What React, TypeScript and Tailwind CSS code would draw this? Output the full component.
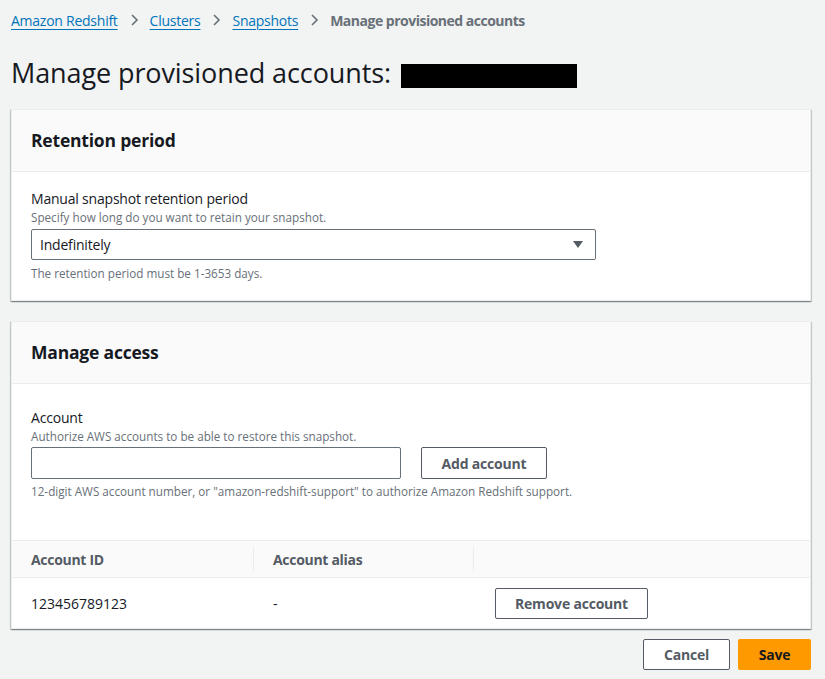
import React from "react";

const font = { fontFamily: '"Open Sans", "Noto Sans", Arial, sans-serif' };

function Chevron() {
  return (
    <svg width="16" height="16" viewBox="0 0 16 16" className="mx-[8px]">
      <path d="M6 3l5 5-5 5" fill="none" stroke="#687078" strokeWidth="1.6" />
    </svg>
  );
}

function Card({ title, children }: { title: string; children: React.ReactNode }) {
  return (
    <div className="bg-white border border-[#eaeded] shadow-[0_1px_1px_0_rgba(0,28,36,0.3),1px_1px_1px_0_rgba(0,28,36,0.15),-1px_1px_1px_0_rgba(0,28,36,0.15)]">
      <div className="h-[62px] bg-[#fafafa] border-b border-[#eaeded] px-[19px] flex items-center">
        <h2 className="text-[17.5px] font-bold text-[#16191f] tracking-[-0.2px]">{title}</h2>
      </div>
      {children}
    </div>
  );
}

export default function App() {
  return (
    <div style={font} className="w-[825px] h-[679px] bg-[#f2f3f3] pl-[11px] pr-[14px] pt-[10px] text-[#16191f] overflow-hidden">
      <nav className="flex items-center text-[14px] h-[20px] tracking-[-0.25px]">
        <a className="text-[#0073bb] underline underline-offset-[3px]">Amazon Redshift</a>
        <Chevron />
        <a className="text-[#0073bb] underline underline-offset-[3px]">Clusters</a>
        <Chevron />
        <a className="text-[#0073bb] underline underline-offset-[3px]">Snapshots</a>
        <Chevron />
        <span className="text-[#687078] font-bold tracking-[-0.5px]">Manage provisioned accounts</span>
      </nav>
      <div className="flex items-center mt-[24px] h-[38px]">
        <h1 className="text-[27px] text-[#16191f] tracking-[-0.1px]">Manage provisioned accounts:</h1>
        <div className="ml-[10px] w-[176px] h-[24px] bg-black mt-[6px]" />
      </div>

      <div className="mt-[17px]">
        <Card title="Retention period">
          <div className="px-[19px] pt-[17px] pb-[19px]">
            <div className="text-[14px] leading-[20px] tracking-[-0.2px]">Manual snapshot retention period</div>
            <div className="text-[11.7px] leading-[16px] text-[#687078]">Specify how long do you want to retain your snapshot.</div>
            <div className="mt-[4px] w-[565px] h-[31px] border border-[#687078] rounded-[2px] flex items-center justify-between pl-[8px] pr-[11px]">
              <span className="text-[14px] tracking-[-0.2px]">Indefinitely</span>
              <svg width="12" height="10" viewBox="0 0 12 10">
                <path d="M1 1h10L6 8z" fill="#545b64" />
              </svg>
            </div>
            <div className="mt-[5px] text-[11.7px] leading-[16px] text-[#687078]">The retention period must be 1-3653 days.</div>
          </div>
        </Card>
      </div>

      <div className="mt-[20px]">
        <Card title="Manage access">
          <div className="px-[19px] pt-[24px] pb-[41px]">
            <div className="text-[14px] leading-[20px] tracking-[-0.2px]">Account</div>
            <div className="text-[11.7px] leading-[16px] text-[#687078]">Authorize AWS accounts to be able to restore this snapshot.</div>
            <div className="mt-[3px] flex items-center gap-[20px]">
              <div className="w-[370px] h-[32px] border border-[#687078] rounded-[2px] bg-white" />
              <button className="w-[126px] h-[32px] border border-[#545b64] rounded-[2px] text-[14px] font-bold text-[#545b64] bg-white tracking-[-0.2px]">Add account</button>
            </div>
            <div className="mt-[4px] text-[11.7px] leading-[16px] text-[#687078]">12-digit AWS account number, or "amazon-redshift-support" to authorize Amazon Redshift support.</div>
          </div>
          <div className="h-[38px] bg-[#fafafa] border-t border-b border-[#eaeded] flex items-center text-[14px] font-bold text-[#545b64] tracking-[-0.3px]">
            <div className="w-[242px] pl-[19px] h-[24px] flex items-center border-r border-[#eaeded]">Account ID</div>
            <div className="w-[220px] pl-[19px] h-[24px] flex items-center border-r border-[#eaeded]">Account alias</div>
          </div>
          <div className="h-[50px] flex items-center text-[14px]">
            <div className="w-[242px] pl-[19px]">123456789123</div>
            <div className="w-[241px] pl-[19px]">-</div>
            <button className="w-[153px] h-[31px] border border-[#545b64] rounded-[2px] text-[14px] font-bold text-[#545b64] bg-white tracking-[-0.2px]">Remove account</button>
          </div>
        </Card>
      </div>

      <div className="mt-[10px] flex justify-end gap-[8px]">
        <button className="w-[87px] h-[31px] border border-[#545b64] rounded-[2px] text-[14px] font-bold text-[#545b64] bg-white tracking-[-0.2px]">Cancel</button>
        <button className="w-[73px] h-[31px] rounded-[2px] text-[14px] font-bold text-[#16191f] bg-[#ff9900] tracking-[-0.2px]">Save</button>
      </div>
    </div>
  );
}
